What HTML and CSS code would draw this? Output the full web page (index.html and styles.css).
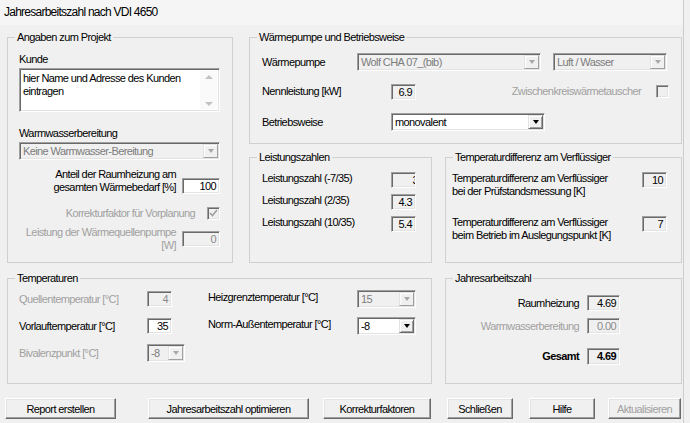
FILE: index.html
```html
<!DOCTYPE html>
<html>
<head>
    <title>Jahresarbeitszahl nach VDI 4650</title>
    <meta charset="UTF-8">
    <link rel="stylesheet" href="styles.css">
</head>
<body>
<div class="window">
    <div class="titlebar">Jahresarbeitszahl nach VDI 4650</div>

    <div class="client">
        <div class="top">
            <!-- Projektangaben -->
            <fieldset class="group g-projekt">
                <legend>Angaben zum Projekt</legend>
                <div class="gbody">
                    <div class="lbl kunde-lbl">Kunde</div>
                    <div class="memo">
                        <div class="memo-text">hier Name und Adresse des Kunden eintragen</div>
                        <div class="vscroll"><span class="arr up"></span><span class="arr down"></span></div>
                    </div>
                    <div class="lbl ww-lbl">Warmwasserbereitung</div>
                    <div class="combo disabled ww-combo">
                        <span class="combo-text">Keine Warmwasser-Bereitung</span>
                        <span class="drop"></span>
                    </div>
                    <div class="pair anteil">
                        <span class="rlabel">Anteil der Raumheizung am<br>gesamten Wärmebedarf [%]</span>
                        <span class="edit white w38">100</span>
                    </div>
                    <div class="pair korr">
                        <span class="rlabel dis">Korrekturfaktor für Vorplanung</span>
                        <span class="check"><svg width="9" height="8" viewBox="0 0 9 8"><path d="M1 4l2.5 2.5L8 1" fill="none" stroke="#a0a0a0" stroke-width="1.6"/></svg></span>
                    </div>
                    <div class="pair pumpe">
                        <span class="rlabel dis">Leistung der Wärmequellenpumpe<br>[W]</span>
                        <span class="edit dis w38">0</span>
                    </div>
                </div>
            </fieldset>

            <div class="right-col">
                <!-- Wärmepumpe -->
                <fieldset class="group g-wp">
                    <legend>Wärmepumpe und Betriebsweise</legend>
                    <div class="gbody">
                        <div class="row wp-row1">
                            <span class="lbl l95">Wärmepumpe</span>
                            <div class="combo disabled w184">
                                <span class="combo-text">Wolf CHA 07_(bib)</span>
                                <span class="drop"></span>
                            </div>
                            <div class="combo disabled w114">
                                <span class="combo-text">Luft / Wasser</span>
                                <span class="drop"></span>
                            </div>
                        </div>
                        <div class="row wp-row2">
                            <span class="lbl l129">Nennleistung [kW]</span>
                            <span class="edit w25">6.9</span>
                            <span class="lbl dis zwk">Zwischenkreiswärmetauscher</span>
                            <span class="check"></span>
                        </div>
                        <div class="row wp-row3">
                            <span class="lbl l129">Betriebsweise</span>
                            <div class="combo w154">
                                <span class="combo-text">monovalent</span>
                                <span class="drop"></span>
                            </div>
                        </div>
                    </div>
                </fieldset>

                <div class="right-row">
                    <fieldset class="group g-lz">
                        <legend>Leistungszahlen</legend>
                        <div class="gbody">
                            <div class="row lz-row">
                                <span class="lbl l129">Leistungszahl (-7/35)</span>
                                <span class="edit w25 cut"><span>3</span></span>
                            </div>
                            <div class="row lz-row">
                                <span class="lbl l129">Leistungszahl (2/35)</span>
                                <span class="edit w25">4.3</span>
                            </div>
                            <div class="row lz-row">
                                <span class="lbl l129">Leistungszahl (10/35)</span>
                                <span class="edit w25">5.4</span>
                            </div>
                        </div>
                    </fieldset>

                    <fieldset class="group g-td">
                        <legend>Temperaturdifferenz am Verflüssiger</legend>
                        <div class="gbody">
                            <div class="row td-row first">
                                <span class="lbl td-lbl">Temperaturdifferenz am Verflüssiger<br>bei der Prüfstandsmessung [K]</span>
                                <span class="edit w25">10</span>
                            </div>
                            <div class="row td-row">
                                <span class="lbl td-lbl">Temperaturdifferenz am Verflüssiger<br>beim Betrieb im Auslegungspunkt [K]</span>
                                <span class="edit w25">7</span>
                            </div>
                        </div>
                    </fieldset>
                </div>
            </div>
        </div>

        <div class="mid">
            <fieldset class="group g-temp">
                <legend>Temperaturen</legend>
                <div class="gbody">
                    <div class="tgrid">
                        <span class="lbl dis">Quellentemperatur [°C]</span>
                        <span class="edit dis w25">4</span>
                        <span class="lbl up2">Heizgrenztemperatur [°C]</span>
                        <div class="combo disabled">
                            <span class="combo-text">15</span>
                            <span class="drop"></span>
                        </div>

                        <span class="lbl">Vorlauftemperatur [°C]</span>
                        <span class="edit white w25">35</span>
                        <span class="lbl up2">Norm-Außentemperatur [°C]</span>
                        <div class="combo">
                            <span class="combo-text">-8</span>
                            <span class="drop"></span>
                        </div>

                        <span class="lbl dis">Bivalenzpunkt [°C]</span>
                        <div class="combo disabled w38">
                            <span class="combo-text">-8</span>
                            <span class="drop"></span>
                        </div>
                    </div>
                </div>
            </fieldset>

            <fieldset class="group g-jaz">
                <legend>Jahresarbeitszahl</legend>
                <div class="gbody">
                    <div class="row jaz-row r1">
                        <span class="rlabel l127">Raumheizung</span>
                        <span class="edit w33">4.69</span>
                    </div>
                    <div class="row jaz-row r2">
                        <span class="rlabel l127 dis">Warmwasserbereitung</span>
                        <span class="edit dis w33">0.00</span>
                    </div>
                    <div class="row jaz-row r3">
                        <span class="rlabel l127 bold">Gesamt</span>
                        <span class="edit w33 bold tall">4.69</span>
                    </div>
                </div>
            </fieldset>
        </div>

        <div class="buttons">
            <button class="btn b-report">Report erstellen</button>
            <button class="btn b-opt">Jahresarbeitszahl optimieren</button>
            <button class="btn b-korr">Korrekturfaktoren</button>
            <button class="btn b-close">Schließen</button>
            <button class="btn b-help">Hilfe</button>
            <button class="btn b-update" disabled>Aktualisieren</button>
        </div>
    </div>
</div>
</body>
</html>
```

FILE: styles.css
```css
* {
    box-sizing: border-box;
}
body {
    margin: 0;
    background-color: #f0f0f0;
    font-family: "Liberation Sans", Arial, sans-serif;
    font-size: 11px;
    letter-spacing: -0.6px;
    line-height: 13px;
    color: #000;
}
.window {
    width: 684px;
    height: 423px;
    border-right: 1px solid #cdcdcd;
    background-color: #f0f0f0;
}
.titlebar {
    height: 25px;
    padding: 5px 0 0 4px;
    font-size: 12px;
    letter-spacing: -0.75px;
    line-height: 14px;
    background-color: #f5f5f5;
}
.client {
    padding: 6px 0 0 7px;
}

/* group boxes */
.group {
    margin: 0;
    padding: 0;
    min-width: 0;
    border: 1px solid #d0d0d0;
}
.group legend {
    margin-left: 7px;
    padding: 0 2px;
    line-height: 13px;
}
.top {
    display: flex;
    gap: 16px;
}
.right-col {
    display: flex;
    flex-direction: column;
    gap: 7px;
}
.right-row,
.mid {
    display: flex;
    gap: 13px;
}
.mid {
    margin-top: 9px;
}
.g-projekt { width: 226px; height: 232px; }
.g-projekt .gbody { padding: 0 12px 0 11px; }
.g-wp { width: 433px; height: 113px; }
.g-wp .gbody { padding: 0 12px 0 12px; }
.g-lz { width: 183px; height: 112px; }
.g-lz .gbody { padding: 0 0 0 12px; }
.g-td { width: 237px; height: 112px; }
.g-td .gbody { padding: 0 14px 0 6px; }
.g-temp { width: 425px; height: 112px; }
.g-temp .gbody { padding: 5px 0 0 11px; }
.g-jaz { width: 237px; height: 112px; }
.g-jaz .gbody { padding: 0 0 0 6px; }

/* labels */
.lbl {
    white-space: nowrap;
}
.rlabel {
    text-align: right;
    white-space: nowrap;
}
.dis {
    color: #a0a0a0;
}
.bold {
    font-weight: bold;
}
.l95 { width: 95px; flex: none; }
.l127 { width: 127px; flex: none; }
.l129 { width: 129px; flex: none; }

/* sunken edit field */
.edit {
    display: block;
    flex: none;
    height: 16px;
    padding: 0 3px;
    border: 1px solid;
    border-color: #a0a0a0 #fff #fff #a0a0a0;
    box-shadow: inset 1px 1px 0 #696969, inset -1px -1px 0 #e3e3e3;
    background-color: #f0f0f0;
    text-align: right;
    line-height: 14px;
    white-space: nowrap;
    overflow: hidden;
}
.edit.white { background-color: #fff; }
.edit.dis { color: #8a8a8a; }
.edit.tall { height: 17px; line-height: 15px; }
.edit.cut { padding-right: 1px; }
.edit.cut span { display: inline-block; margin-right: -4px; }
.w25 { width: 25px; }
.w33 { width: 33px; }
.w38 { width: 38px; }

/* combo box */
.combo {
    display: flex;
    flex: none;
    height: 18px;
    padding: 1px;
    border: 1px solid;
    border-color: #a0a0a0 #fff #fff #a0a0a0;
    box-shadow: inset 1px 1px 0 #696969, inset -1px -1px 0 #e3e3e3;
    background-color: #fff;
}
.combo-text {
    flex: 1;
    padding-left: 2px;
    line-height: 14px;
    white-space: nowrap;
    overflow: hidden;
}
.drop {
    width: 15px;
    flex: none;
    display: flex;
    align-items: center;
    justify-content: center;
    background-color: #f0f0f0;
    border: 1px solid;
    border-color: #e3e3e3 #696969 #696969 #e3e3e3;
    box-shadow: inset 1px 1px 0 #fff, inset -1px -1px 0 #a0a0a0;
}
.drop::after {
    content: "";
    border-top: 4px solid #000;
    border-left: 3.5px solid transparent;
    border-right: 3.5px solid transparent;
}
.combo.disabled {
    background-color: #f0f0f0;
    color: #7c7c7c;
}
.combo.disabled .drop {
    border-color: #e3e3e3 #a0a0a0 #a0a0a0 #e3e3e3;
    box-shadow: inset 1px 1px 0 #fff;
}
.combo.disabled .drop::after {
    border-top-color: #a8a8a8;
}
.w114 { width: 114px; }
.w154 { width: 154px; }
.w184 { width: 184px; }

/* checkbox */
.check {
    width: 13px;
    height: 13px;
    flex: none;
    display: flex;
    align-items: center;
    justify-content: center;
    border: 1px solid;
    border-color: #a0a0a0 #fff #fff #a0a0a0;
    box-shadow: inset 1px 1px 0 #696969, inset -1px -1px 0 #e3e3e3;
    background-color: #f0f0f0;
}

/* multi-line text field */
.memo {
    display: flex;
    height: 44px;
    margin-top: 2px;
    padding: 2px;
    border: 1px solid;
    border-color: #a0a0a0 #fff #fff #a0a0a0;
    box-shadow: inset 1px 1px 0 #696969, inset -1px -1px 0 #e3e3e3;
    background-color: #fff;
}
.memo-text {
    flex: 1;
    padding: 1px 0 0 1px;
    line-height: 13px;
}
.vscroll {
    width: 17px;
    display: flex;
    flex-direction: column;
    justify-content: space-between;
    align-items: center;
    padding: 4px 0 3px;
    background-color: #fafafa;
}
.arr {
    border-left: 4px solid transparent;
    border-right: 4px solid transparent;
}
.arr.up { border-bottom: 4px solid #c2c2c2; }
.arr.down { border-top: 4px solid #c2c2c2; }

/* Angaben zum Projekt */
.kunde-lbl { margin-top: 9px; }
.ww-lbl { margin-top: 15px; }
.ww-combo { margin-top: 2px; }
.pair {
    display: flex;
    justify-content: flex-end;
    gap: 6px;
}
.anteil {
    margin-top: 8px;
    height: 26px;
    align-items: flex-end;
}
.korr {
    margin-top: 12px;
    height: 14px;
    align-items: center;
    gap: 12px;
    padding-right: 0;
}
.pumpe {
    margin-top: 6px;
    height: 26px;
    align-items: flex-start;
}
.pumpe .edit {
    margin-top: 5px;
}

/* rows */
.row {
    display: flex;
    align-items: center;
}
.wp-row1 { margin-top: 9px; height: 18px; gap: 0; }
.wp-row1 .w114 { margin-left: 12px; }
.wp-row2 { margin-top: 12px; height: 17px; }
.wp-row3 { margin-top: 13px; height: 18px; }
.zwk { margin-left: auto; margin-right: 15px; }

.lz-row { height: 16px; margin-top: 6px; align-items: flex-start; }
.lz-row:first-child { margin-top: 8px; }

.td-row {
    height: 26px;
    margin-top: 18px;
    align-items: flex-start;
    justify-content: space-between;
}
.td-row.first { margin-top: 8px; }

.tgrid {
    display: grid;
    grid-template-columns: 128px 61px 149px 59px;
    grid-auto-rows: 18px;
    row-gap: 9px;
    align-items: center;
}
.tgrid .up2 { margin-top: -4px; }

.jaz-row { gap: 8px; }
.jaz-row.r1 { margin-top: 10px; height: 16px; }
.jaz-row.r2 { margin-top: 7px; height: 16px; }
.jaz-row.r3 { margin-top: 14px; height: 17px; }

/* buttons */
.buttons {
    display: flex;
    margin: 14px 0 0 -2px;
}
.btn {
    height: 21px;
    padding: 0;
    border: 1px solid;
    border-color: #fff #696969 #696969 #fff;
    box-shadow: inset -1px -1px 0 #a0a0a0, inset 1px 1px 0 #e3e3e3;
    background-color: #f0f0f0;
    font-family: inherit;
    font-size: 11px;
    letter-spacing: inherit;
    color: #000;
}
.btn:disabled {
    color: #a0a0a0;
}
.b-report { width: 111px; }
.b-opt { width: 161px; margin-left: 32px; }
.b-korr { width: 108px; margin-left: 14px; }
.b-close { width: 66px; margin-left: 16px; }
.b-help { width: 66px; margin-left: 16px; }
.b-update { width: 73px; margin-left: 13px; }
```
